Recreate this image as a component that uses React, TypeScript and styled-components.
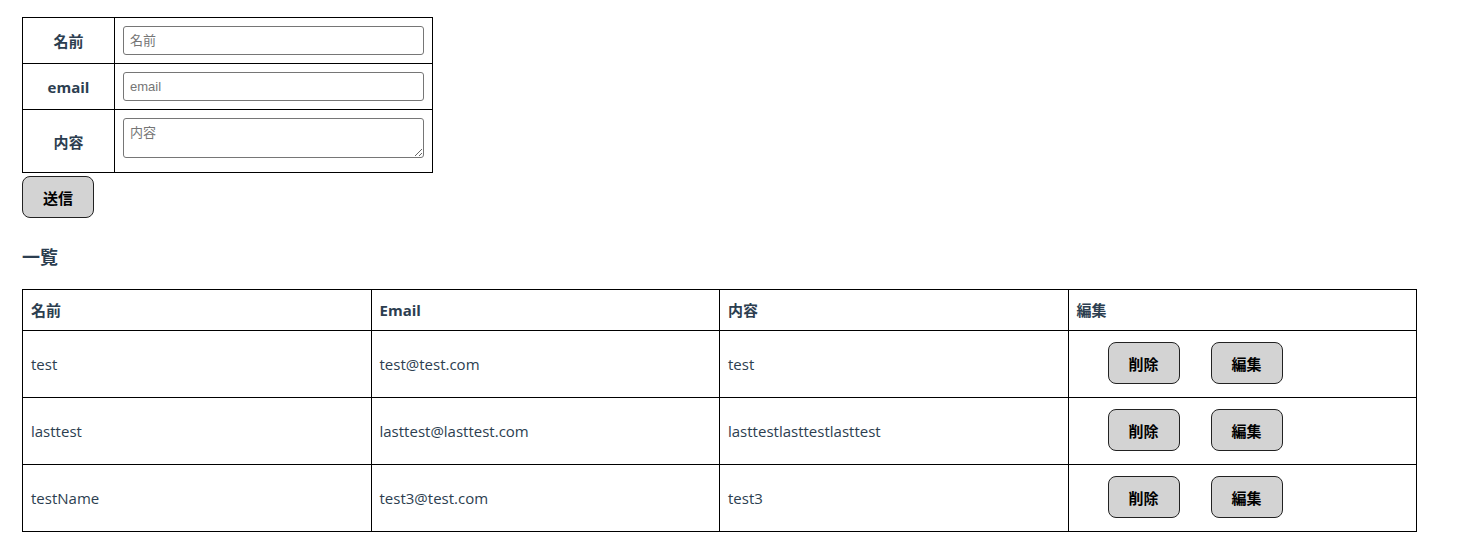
import * as React from 'react';
import styled, { createGlobalStyle } from 'styled-components';

const GlobalStyle = createGlobalStyle`
  body {
    margin: 0;
    background: #fff;
    color: #2c3e50;
    font-family: 'Open Sans', 'Noto Sans CJK JP', sans-serif;
  }
`;

const Page = styled.div`
  display: flex;
  flex-direction: column;
  align-items: flex-start;
  padding: 17px 22px;
`;

const FormTable = styled.table`
  border-collapse: collapse;
  font-size: 15px;
`;

const FormLabel = styled.th`
  border: 1px solid #000;
  width: 75px;
  padding: 8px;
  text-align: center;
  font-weight: 700;
`;

const FormCell = styled.td`
  border: 1px solid #000;
  padding: 8px;
  width: 301px;
`;

const TextInput = styled.input`
  display: block;
  box-sizing: border-box;
  width: 301px;
  height: 29px;
  padding: 1px 6px;
  border: 1px solid #767676;
  border-radius: 3px;
  font-family: 'Liberation Sans', 'Noto Sans CJK JP', sans-serif;
  font-size: 13px;
  color: #000;

  &::placeholder {
    color: #757575;
  }
`;

const TextArea = styled.textarea`
  display: block;
  box-sizing: border-box;
  width: 301px;
  height: 40px;
  margin-bottom: 6px;
  padding: 3px 6px;
  border: 1px solid #767676;
  border-radius: 3px;
  font-family: 'Liberation Sans', 'Noto Sans CJK JP', sans-serif;
  font-size: 13px;

  &::placeholder {
    color: #757575;
  }
`;

const GrayButton = styled.button`
  box-sizing: border-box;
  width: 72px;
  height: 42px;
  border: 1px solid #222;
  border-radius: 8px;
  background: #d3d3d3;
  color: #000;
  font-family: 'Open Sans', 'Noto Sans CJK JP', sans-serif;
  font-size: 15px;
  font-weight: 700;
  cursor: pointer;
`;

const SubmitButton = styled(GrayButton)`
  margin-top: 3px;
`;

const Heading = styled.h3`
  margin: 27px 0 20px;
  font-size: 18px;
  line-height: 24px;
  font-weight: 700;
`;

const ListTable = styled.table`
  border-collapse: collapse;
  width: 1395px;
  table-layout: fixed;
  font-size: 15px;
`;

const HeadCell = styled.th`
  border: 1px solid #000;
  padding: 10px 8px;
  line-height: 20px;
  text-align: left;
  font-weight: 700;
`;

const BodyCell = styled.td`
  border: 1px solid #000;
  padding: 10px 8px;
  line-height: 20px;
  height: 46px;
  vertical-align: middle;
`;

const Actions = styled.div`
  display: flex;
  gap: 31px;
  padding-left: 31px;
`;

const ActionButton = styled(GrayButton)`
  margin: 1px 0 3px;
`;

type Post = { name: string; email: string; content: string };

const posts: Post[] = [
  { name: 'test', email: 'test@test.com', content: 'test' },
  { name: 'lasttest', email: 'lasttest@lasttest.com', content: 'lasttestlasttestlasttest' },
  { name: 'testName', email: 'test3@test.com', content: 'test3' },
];

const App: React.FC = (): JSX.Element => (
  <>
    <GlobalStyle />
    <Page>
      <FormTable>
        <tbody>
          <tr>
            <FormLabel>名前</FormLabel>
            <FormCell>
              <TextInput placeholder="名前" />
            </FormCell>
          </tr>
          <tr>
            <FormLabel>email</FormLabel>
            <FormCell>
              <TextInput placeholder="email" />
            </FormCell>
          </tr>
          <tr>
            <FormLabel>内容</FormLabel>
            <FormCell>
              <TextArea placeholder="内容" />
            </FormCell>
          </tr>
        </tbody>
      </FormTable>

      <SubmitButton>送信</SubmitButton>

      <Heading>一覧</Heading>

      <ListTable>
        <thead>
          <tr>
            <HeadCell>名前</HeadCell>
            <HeadCell>Email</HeadCell>
            <HeadCell>内容</HeadCell>
            <HeadCell>編集</HeadCell>
          </tr>
        </thead>
        <tbody>
          {posts.map((post) => (
            <tr key={post.email}>
              <BodyCell>{post.name}</BodyCell>
              <BodyCell>{post.email}</BodyCell>
              <BodyCell>{post.content}</BodyCell>
              <BodyCell>
                <Actions>
                  <ActionButton>削除</ActionButton>
                  <ActionButton>編集</ActionButton>
                </Actions>
              </BodyCell>
            </tr>
          ))}
        </tbody>
      </ListTable>
    </Page>
  </>
);

export default App;
